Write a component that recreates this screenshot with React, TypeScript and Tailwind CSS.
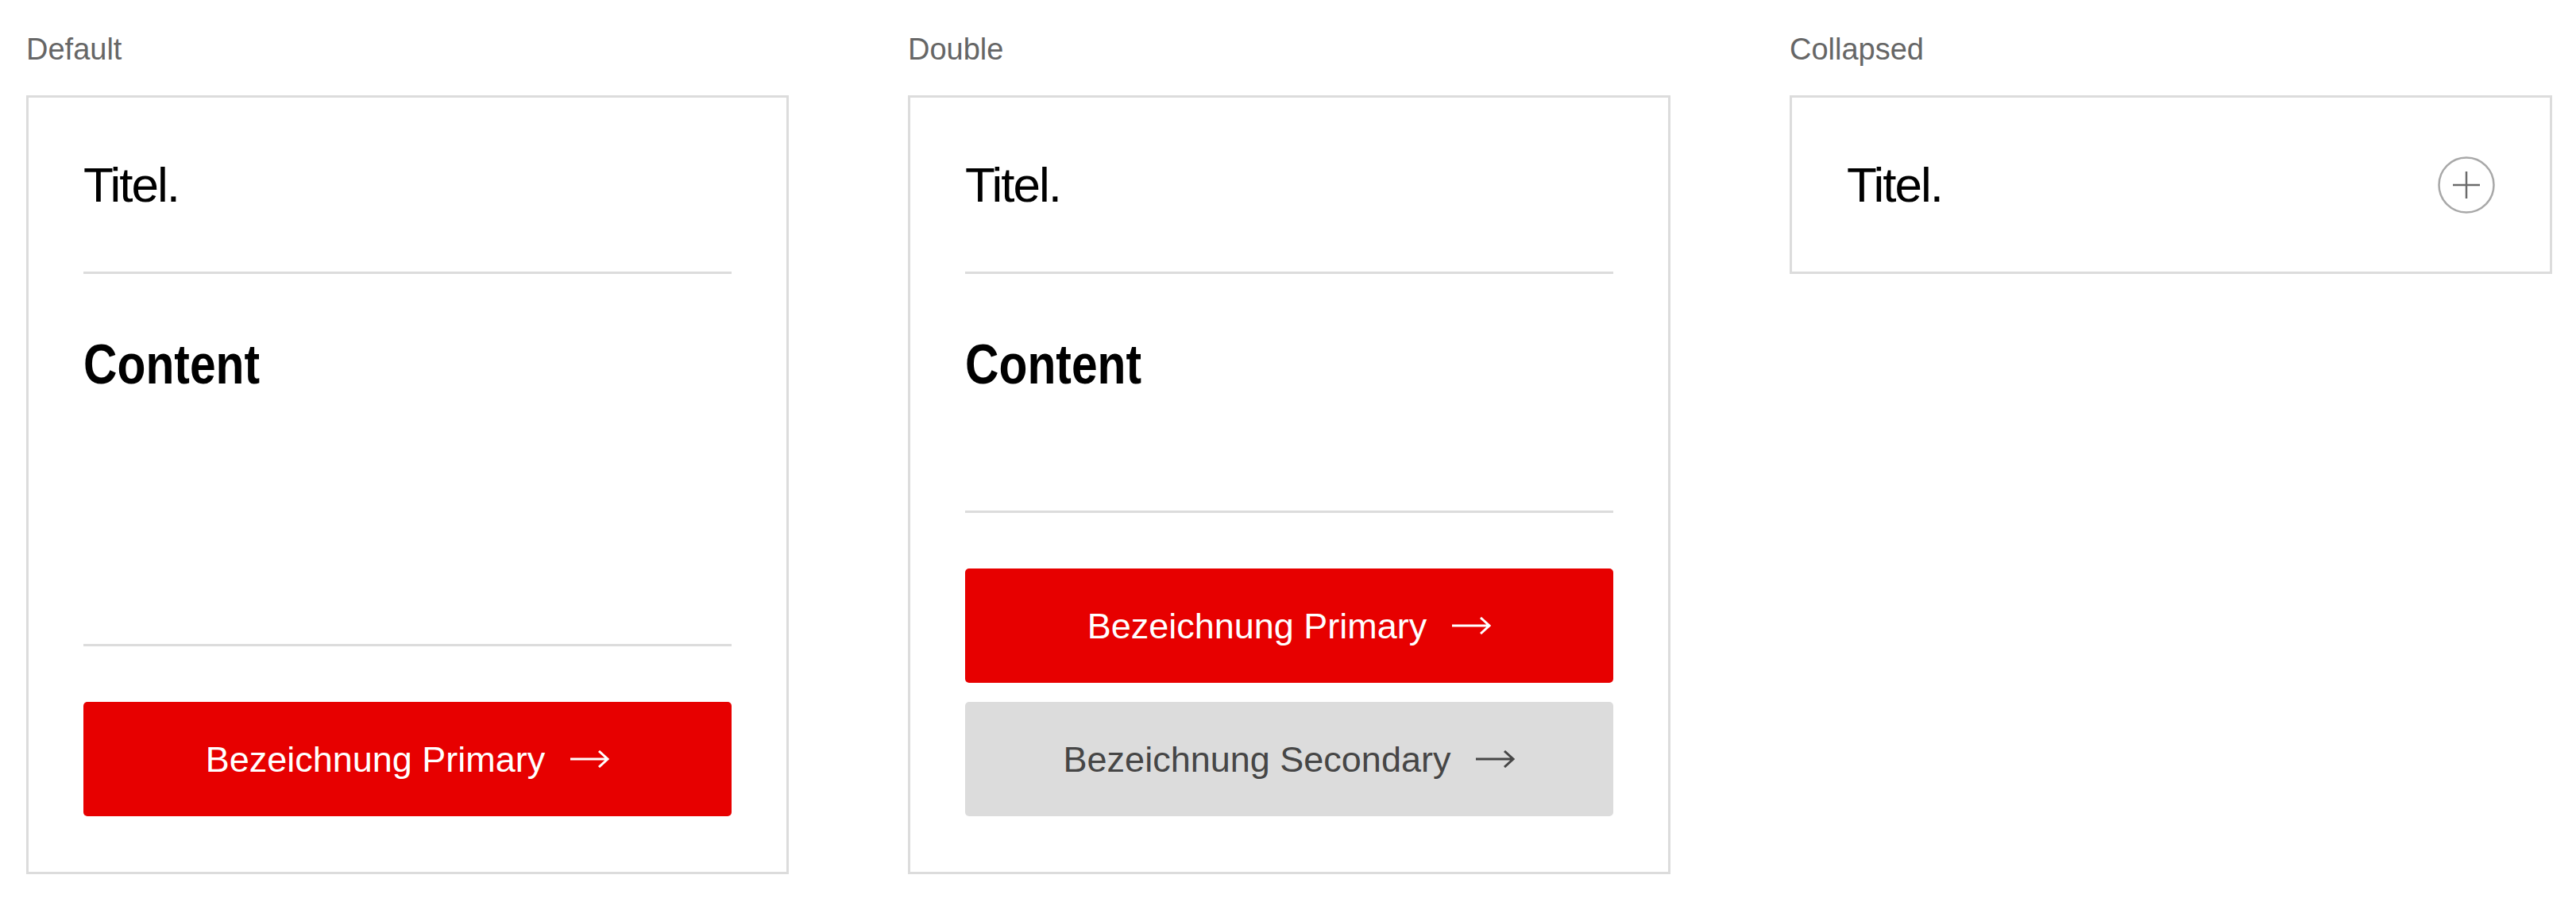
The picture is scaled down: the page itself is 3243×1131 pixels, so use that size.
import React from 'react';

type Variant = 'primary' | 'secondary';

function Arrow({ color }: { color: string }) {
  return (
    <svg width="49" height="22" viewBox="0 0 49 22" fill="none" aria-hidden="true">
      <path d="M0 11 H47 M36 1 L47 11 L36 21" stroke={color} strokeWidth="3" />
    </svg>
  );
}

function PlusCircle() {
  return (
    <svg width="72" height="72" viewBox="0 0 72 72" fill="none" aria-hidden="true">
      <circle cx="36" cy="36" r="34.5" stroke="#a8a8a8" strokeWidth="2.5" />
      <path d="M19 36 H53 M36 19 V53" stroke="#6b6b6b" strokeWidth="2.5" />
    </svg>
  );
}

function CtaButton({ label, variant }: { label: string; variant: Variant }) {
  const primary = variant === 'primary';
  return (
    <button
      className={
        primary
          ? 'flex h-[144px] w-full items-center justify-center gap-[32px] rounded-[5px] bg-[#e70000] text-white'
          : 'flex h-[144px] w-full items-center justify-center gap-[32px] rounded-[5px] bg-[#dcdcdc] text-[#464646]'
      }
    >
      <span className="text-[45px] leading-none">{label}</span>
      <Arrow color={primary ? '#ffffff' : '#464646'} />
    </button>
  );
}

function Divider() {
  return <div className="h-[3px] w-full bg-[#dcdcdc]" />;
}

function Header({ collapsed }: { collapsed?: boolean }) {
  return (
    <div className="flex h-[219px] items-center justify-between">
      <h2 className="text-[62px] leading-none tracking-[-2px] text-black">Titel.</h2>
      {collapsed && <PlusCircle />}
    </div>
  );
}

function Column({ label, children }: { label: string; children: React.ReactNode }) {
  return (
    <div className="flex w-[960px] flex-col">
      <div className="mb-[39px] h-[38px] text-[38px] leading-none text-[#666666]">{label}</div>
      {children}
    </div>
  );
}

function ExpandedCard({ buttons }: { buttons: { label: string; variant: Variant }[] }) {
  return (
    <div className="flex h-[981px] flex-col border-[3px] border-[#dcdcdc] px-[69px]">
      <Header />
      <Divider />
      <div className="flex-1 pt-[79px]">
        {/* narrow bold: Liberation Sans squeezed to the condensed width */}
        <p className="inline-block origin-left scale-x-[0.84] text-[70px] font-bold leading-none text-black">
          Content
        </p>
      </div>
      <Divider />
      <div className="flex flex-col gap-[24px] py-[70px]">
        {buttons.map((b) => (
          <CtaButton key={b.label} label={b.label} variant={b.variant} />
        ))}
      </div>
    </div>
  );
}

export default function App() {
  return (
    <div className="flex min-h-screen items-start gap-[150px] bg-white pl-[33px] pt-[43px] font-['Liberation_Sans',Arial,sans-serif]">
      <Column label="Default">
        <ExpandedCard buttons={[{ label: 'Bezeichnung Primary', variant: 'primary' }]} />
      </Column>
      <Column label="Double">
        <ExpandedCard
          buttons={[
            { label: 'Bezeichnung Primary', variant: 'primary' },
            { label: 'Bezeichnung Secondary', variant: 'secondary' },
          ]}
        />
      </Column>
      <Column label="Collapsed">
        <div className="border-[3px] border-[#dcdcdc] px-[69px]">
          <Header collapsed />
        </div>
      </Column>
    </div>
  );
}
